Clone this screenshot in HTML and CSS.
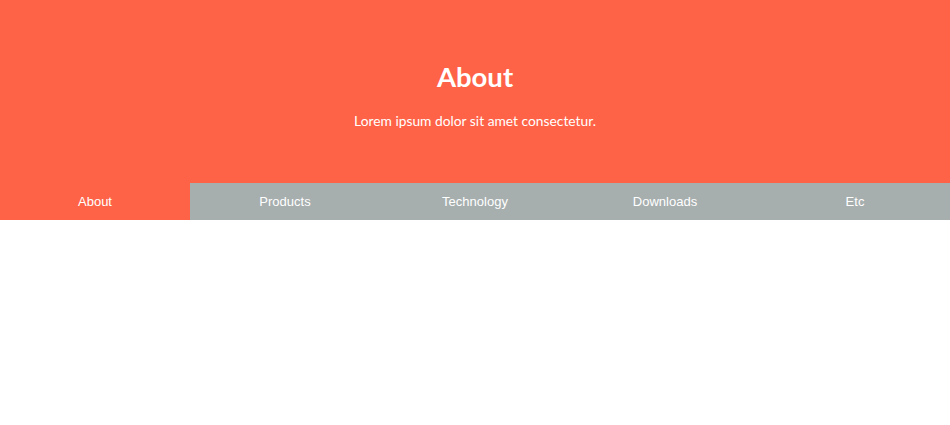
FILE: index.html
```html
<!DOCTYPE html>
<html>
<head>
<meta charset="utf-8">
<link rel="stylesheet" href="styles.css">
</head>
<body>
<header class="hero">
  <h1 class="hero-title">About</h1>
  <p class="hero-sub">Lorem ipsum dolor sit amet consectetur.</p>
</header>
<nav class="tabs">
  <a class="tab active">About</a>
  <a class="tab">Products</a>
  <a class="tab">Technology</a>
  <a class="tab">Downloads</a>
  <a class="tab">Etc</a>
</nav>
</body>
</html>
```
FILE: styles.css
```css
* { box-sizing: border-box; }
html, body { margin: 0; padding: 0; background: #fff; }
.hero {
  background: #ff6347;
  height: 183px;
  display: flex;
  flex-direction: column;
  align-items: center;
  padding-top: 58px;
  color: #fff;
  font-family: Lato, "Open Sans", sans-serif;
}
.hero-title {
  margin: 0;
  font-size: 27.5px;
  font-weight: 700;
  line-height: 37px;
}
.hero-sub {
  margin: 17px 0 0;
  font-size: 13.8px;
  line-height: 18px;
}
.tabs {
  display: grid;
  grid-template-columns: repeat(5, 1fr);
  background: #a6aeae;
  height: 37px;
}
.tab {
  display: flex;
  align-items: center;
  justify-content: center;
  padding-bottom: 1px;
  color: #fff;
  font-family: "Liberation Sans", Arial, sans-serif;
  font-size: 13px;
}
.tab.active { background: #ff6347; }
```
